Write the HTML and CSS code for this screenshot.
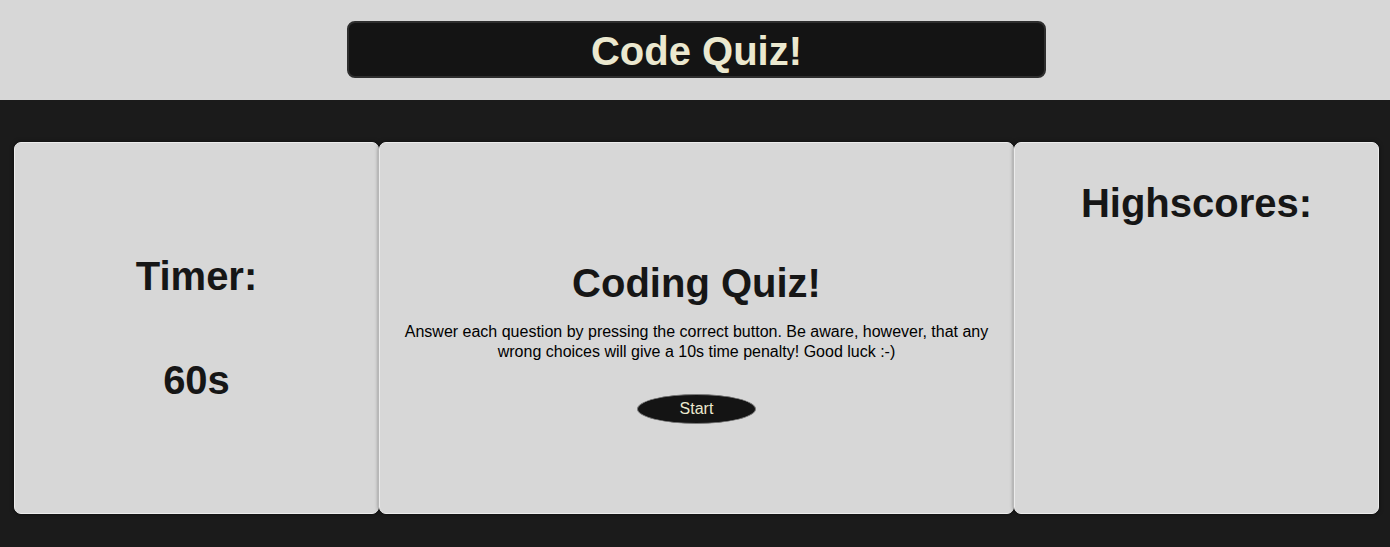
FILE: index.html
```html
<!DOCTYPE html>
<html lang="en">
<head>
<meta charset="utf-8">
<title>Code Quiz</title>
<link rel="stylesheet" href="styles.css">
</head>
<body>
<header class="top">
  <div class="title-box"><h1 class="title">Code Quiz!</h1></div>
</header>
<main class="board">
  <section class="card card-side timer">
    <h1 class="heading">Timer:</h1>
    <h1 class="heading">60s</h1>
  </section>
  <section class="card card-main">
    <h1 class="heading">Coding Quiz!</h1>
    <p class="intro">Answer each question by pressing the correct button. Be aware, however, that any wrong choices will give a 10s time penalty! Good luck :-)</p>
    <button class="start">Start</button>
  </section>
  <section class="card card-side scores">
    <h1 class="heading">Highscores:</h1>
  </section>
</main>
</body>
</html>
```
FILE: styles.css
```css
* { box-sizing: border-box; }
html, body { margin: 0; padding: 0; }
body {
  font-family: "Liberation Sans", Arial, sans-serif;
  background: #1b1b1b;
  height: 547px;
  overflow: hidden;
}
.top {
  background: #d7d7d7;
  height: 100px;
  padding: 21px 0 0 3px;
}
.title-box {
  width: 699px;
  height: 57px;
  margin: 0 auto;
  padding-top: 2px;
  background: #141414;
  border: 2px solid #2e2e2e;
  border-radius: 8px;
  display: flex;
  align-items: center;
  justify-content: center;
}
.title {
  margin: 0;
  font-size: 40px;
  line-height: 46px;
  font-weight: bold;
  color: #ebe8cf;
}
.board {
  display: flex;
  padding: 42px 11px 0 14px;
}
.card {
  background: #d7d7d7;
  height: 372px;
  border: 1px solid #ececec;
  border-radius: 7px;
  box-shadow: 0 0 4px rgba(0, 0, 0, 0.55);
  text-align: center;
  color: #161616;
}
.card-side { width: 365px; }
.card-main { width: 635px; padding-top: 117px; }
.heading {
  margin: 0;
  font-size: 40px;
  line-height: 46px;
  font-weight: bold;
}
.timer {
  display: flex;
  flex-direction: column;
  justify-content: center;
  gap: 58px;
}
.scores { padding-top: 37px; }
.intro {
  margin: 16px 0 0;
  padding: 0 20px;
  font-size: 16px;
  line-height: 20px;
  color: #000;
}
.start {
  margin-top: 32px;
  width: 119px;
  height: 30px;
  border-radius: 50%;
  background: #141414;
  border: 1px solid #7a7a7a;
  color: #ebe8cf;
  font-family: "Liberation Sans", Arial, sans-serif;
  font-size: 16px;
  padding: 0;
}
```
